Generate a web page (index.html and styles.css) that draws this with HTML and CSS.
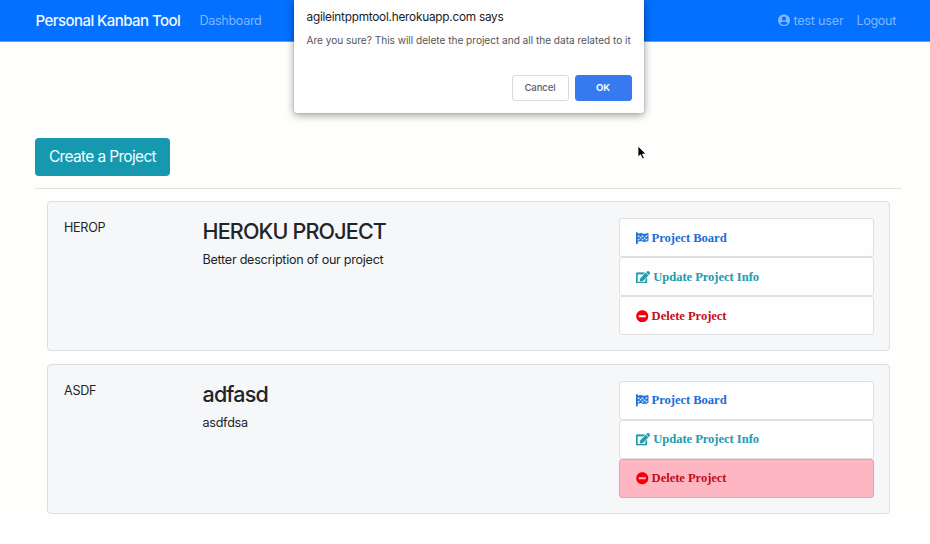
FILE: index.html
```html
<!DOCTYPE html>
<html lang="en">
<head>
<meta charset="utf-8">
<title>Personal Kanban Tool</title>
<link rel="stylesheet" href="styles.css">
</head>
<body>
<svg class="sprite" aria-hidden="true">
  <symbol id="user" viewBox="0 0 496 512"><path fill-rule="evenodd" d="M248 8a248 248 0 1 0 0 496a248 248 0 1 0 0-496zM248 104a88 88 0 1 1 0 176a88 88 0 1 1 0-176zM248 448c-58.700 0-111.300-26.600-146.500-68.200 18.800-35.400 55.600-59.800 98.500-59.800 2.400 0 4.800.4 7.100 1.100 13 4.200 26.600 6.900 40.900 6.900s28-2.700 40.900-6.900c2.300-.7 4.700-1.100 7.100-1.100 42.900 0 79.700 24.400 98.500 59.800C359.300 421.400 306.700 448 248 448z"/></symbol>
  <symbol id="flag" viewBox="0 0 512 512"><path fill-rule="evenodd" d="M32 8a40 40 0 0 1 32 64v14C105 64 145 48 190 48c61 0 100 32 157 32 40 0 78-13 118-31 22-10 47 5 47 29v253c0 12-6 22-16 28-39 26-86 41-136 41-66 0-110-32-175-32-49 0-87 12-121 28v92c0 13-8 24-20 24H20c-12 0-20-11-20-24V72A40 40 0 0 1 32 8zM64 148v70c30-14 51-21 80-26v-72c-30 5-52 13-80 28zM144 192v70c30-3 52 0 80 8v-72c-28-8-50-10-80-6zM224 122v76c29 9 51 17 80 21v-74c-29-6-51-17-80-23zM304 219v71c31 4 51 3 80-3v-72c-29 7-50 8-80 4zM384 142v73c29-7 51-16 80-30v-72c-29 13-51 23-80 29zM384 287v70c31-7 55-17 80-32v-69c-29 15-51 25-80 31zM224 270v69c29 6 50 15 80 20v-69c-29-6-51-14-80-20zM64 291v69c29-12 50-18 80-22v-76c-29 7-51 15-80 29z"/></symbol>
  <symbol id="edit" viewBox="0 0 576 512"><path d="M402.600 83.200l90.200 90.200c3.800 3.800 3.800 10 0 13.800L274.400 405.600l-92.800 10.300c-12.400 1.400-22.900-9.100-21.500-21.500l10.300-92.800L388.800 83.200c3.800-3.800 10-3.800 13.800 0zm162-22.900l-48.800-48.800c-15.200-15.200-39.900-15.200-55.200 0l-35.400 35.400c-3.800 3.800-3.800 10 0 13.800l90.200 90.200c3.800 3.800 10 3.800 13.800 0l35.400-35.400c15.200-15.300 15.200-40 0-55.200zM384 346.200V448H64V128h229.800c3.200 0 6.200-1.300 8.500-3.500l40-40c7.600-7.600 2.200-20.500-8.500-20.500H48C21.500 64 0 85.500 0 112v352c0 26.500 21.500 48 48 48h352c26.500 0 48-21.500 48-48V306.200c0-10.700-12.900-16-20.500-8.500l-40 40c-2.200 2.300-3.500 5.300-3.500 8.500z"/></symbol>
  <symbol id="minus" viewBox="0 0 512 512"><path d="M256 8C119 8 8 119 8 256s111 248 248 248 248-111 248-248S393 8 256 8zM124 296c-6.600 0-12-5.400-12-12v-56c0-6.600 5.400-12 12-12h264c6.600 0 12 5.400 12 12v56c0 6.600-5.400 12-12 12H124z"/></symbol>
</svg>
<div class="page">
  <nav class="navbar">
    <a class="brand">Personal Kanban Tool</a>
    <a class="nav-link dash">Dashboard</a>
    <a class="nav-link user"><svg class="user-icon"><use href="#user"/></svg><span>test user</span></a>
    <a class="nav-link logout">Logout</a>
  </nav>
  <main class="container">
    <a class="create"><span>Create a Project</span></a>
    <hr>
    <section class="card">
      <div class="ident">HEROP</div>
      <div class="details"><h3>HEROKU PROJECT</h3><p>Better description of our project</p></div>
      <ul class="actions">
        <li class="board"><svg class="icon"><use href="#flag"/></svg><span>Project Board</span></li>
        <li class="update"><svg class="icon wide"><use href="#edit"/></svg><span>Update Project Info</span></li>
        <li class="delete"><svg class="icon"><use href="#minus"/></svg><span>Delete Project</span></li>
      </ul>
    </section>
    <section class="card">
      <div class="ident">ASDF</div>
      <div class="details"><h3>adfasd</h3><p>asdfdsa</p></div>
      <ul class="actions">
        <li class="board"><svg class="icon"><use href="#flag"/></svg><span>Project Board</span></li>
        <li class="update"><svg class="icon wide"><use href="#edit"/></svg><span>Update Project Info</span></li>
        <li class="delete hovered"><svg class="icon"><use href="#minus"/></svg><span>Delete Project</span></li>
      </ul>
    </section>
  </main>
</div>
<div class="dialog" role="dialog">
  <div class="dialog-title"><span>agileintppmtool.herokuapp.com says</span></div>
  <div class="dialog-text"><span>Are you sure? This will delete the project and all the data related to it</span></div>
  <div class="dialog-buttons"><button>Cancel</button><button class="ok">OK</button></div>
</div>
<svg class="cursor" viewBox="0 0 10 15"><path d="M1 1v11l2.500-2.300 1.900 4.100 1.900-.9-1.900-3.900H9z" fill="#000" stroke="#fff" stroke-width=".8"/></svg>
</body>
</html>
```
FILE: styles.css
```css
* { box-sizing: border-box; }
body { margin: 0; height: 544px; overflow: hidden; background: #fff; color: #212529; font: 12.6px/19px Inter, "Liberation Sans", sans-serif; }
.sprite { position: absolute; width: 0; height: 0; }
svg { fill: currentColor; flex: none; }
.page { height: 518px; background: #fefefd; }
.navbar { height: 42px; padding: 0 34px 1px 35.500px; display: flex; align-items: center; background: #0370ff; border-bottom: 1px solid #5aa2fb; white-space: nowrap; }
.brand { color: #f2f8ff; font-size: 15px; font-weight: 500; letter-spacing: -.56px; width: 164px; }
.nav-link { color: #80b7ff; letter-spacing: -.33px; }
.user { margin-left: auto; display: flex; align-items: center; gap: 3px; letter-spacing: -.2px; }
.user-icon { width: 12px; height: 12.500px; }
.logout { margin-left: 13px; }
.container { padding: 96px 28px 0 35px; }
.create { display: flex; align-items: center; justify-content: center; width: 135px; height: 37.500px; border-radius: 4px; background: #1698ae; color: #f0ffff; font-size: 15.500px; white-space: nowrap; letter-spacing: -.66px; }
hr { height: 1px; border: 0; margin: 12px 0 12.500px; background: #e2e2e3; }
.card { display: flex; height: 150px; margin: 0 12px 12.500px; padding: 16px 15px 15px; border: 1px solid #dcdee0; border-radius: 4px; background: #f6f7f9; }
.ident { width: 139.500px; padding-left: 1px; letter-spacing: -.3px; }
.details { flex: 1; padding-top: 1px; white-space: nowrap; }
h3 { margin: 0 0 6px; font-size: 21.500px; line-height: 25px; font-weight: 500; letter-spacing: -.83px; }
p { margin: 0; line-height: 19px; letter-spacing: -.27px; }
.actions { list-style: none; width: 255px; margin: 0; padding: 0; font: bold 12.600px/19px "Liberation Serif", serif; letter-spacing: -.05px; }
.actions li { display: flex; align-items: center; gap: 3px; height: 39px; padding: 1px 16px 0; border: 1px solid #dfdfdf; border-radius: 3px; background: #fefefe; }
.icon { width: 12.600px; height: 12.600px; }
.icon.wide { width: 14.200px; }
.update .icon, .board .icon { stroke: currentColor; stroke-width: 12; }
.board { color: #1a6ed8; }
.update { color: #249aae; }
.delete { color: #c30d19; }
.delete .icon { color: #f4000c; }
.actions .hovered { background: #ffb6c3; border-color: #e4a3af; }
.dialog { position: absolute; left: 294px; top: 0; width: 350px; height: 113px; padding: 7px 12.500px 12px; background: #fefefe; border-radius: 0 0 2px 2px; box-shadow: 0 2px 8px #0006, 0 0 1px #0008; white-space: nowrap; }
.dialog-title { color: #202124; font-size: 11.800px; line-height: 20px; letter-spacing: -.24px; }
.dialog-text { margin-top: 4px; color: #555658; font-size: 10.100px; line-height: 18px; letter-spacing: -.02px; }
.dialog-buttons { display: flex; justify-content: flex-end; gap: 6px; margin-top: 26px; }
button { width: 57px; height: 26px; padding: 0 0 1px; border: 1px solid #d8dade; border-radius: 3px; background: #fefefe; color: #606164; font: 500 9.600px Inter, sans-serif; letter-spacing: -.1px; }
.ok { border-color: #3779ef; background: #3779ef; color: #fff; font-weight: 600; }
.cursor { position: absolute; left: 637px; top: 145px; width: 10px; height: 15px; }
```
